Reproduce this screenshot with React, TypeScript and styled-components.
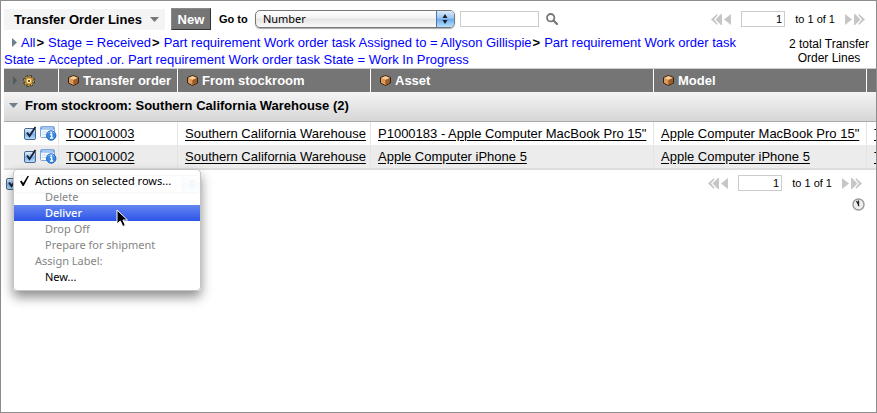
import React from "react";
import styled, { createGlobalStyle, css } from "styled-components";

const GlobalStyle = createGlobalStyle`
  * { box-sizing: border-box; }
  body { margin: 0; background: #fff; }
  body, button, input, select { font-family: "Liberation Sans", Arial, sans-serif; }
`;

const Window = styled.main`
  min-height: 100vh;
  border: 1px solid #8c8c8c;
  padding: 7px 0 0 3px;
  overflow: hidden;
  color: #000;
  font-size: 13px;
`;

const Toolbar = styled.header`
  display: flex;
  align-items: center;
  height: 22px;
`;

const TitleButton = styled.button`
  display: flex;
  align-items: center;
  gap: 8px;
  height: 21px;
  padding: 0 6px 0 10px;
  border: 0;
  background: #f4f4f4;
  font-size: 13px;
  font-weight: bold;
  line-height: 21px;
  white-space: nowrap;
`;

const NewButton = styled.button`
  height: 22px;
  width: 40px;
  margin: 0 8px 0 6px;
  padding: 0;
  border: 1px solid #8a8a8a;
  border-right-color: #333;
  border-bottom-color: #333;
  background: #757575;
  color: #fff;
  font-size: 13px;
  font-weight: bold;
`;

const GoTo = styled.label`
  width: 36px;
  font-size: 11px;
  font-weight: bold;
  white-space: nowrap;
`;

const SelectFrame = styled.span<{ $width: number }>`
  display: grid;
  grid-template-columns: 1fr 18px;
  width: ${(p) => p.$width}px;
  height: 18px;
  overflow: hidden;
  border: 1px solid #777;
  border-radius: 5px;
  background: linear-gradient(#fff, #f2f2f2 45%, #e4e4e4 50%, #fafafa);
  box-shadow: 0 1px 1px #aaa;
`;

const Select = styled.select`
  grid-area: 1 / 1 / 2 / 3;
  width: 100%;
  padding: 0 0 0 7px;
  border: 0;
  background: transparent;
  appearance: none;
  color: #000;
  font-family: "Noto Sans", sans-serif;
  font-size: 11px;
  line-height: 16px;
`;

const StepperBox = styled.span`
  grid-area: 1 / 2;
  display: grid;
  place-items: center;
  border-left: 1px solid #4d74ae;
  background: linear-gradient(#dcebfb, #9cc5f0 45%, #6fabe8 52%, #b5e0ff);
  pointer-events: none;
`;

const TextBox = styled.input<{ $width: number; $end?: boolean }>`
  width: ${(p) => p.$width}px;
  height: 16px;
  padding: 0 2px;
  border: 1px solid #ccc;
  border-radius: 0;
  background: #fff;
  font-size: 11px;
  text-align: ${(p) => (p.$end ? "right" : "left")};
`;

const IconButton = styled.button`
  display: flex;
  padding: 0;
  border: 0;
  background: transparent;
`;

const SearchArea = styled.div`
  display: flex;
  align-items: center;
  gap: 7px;
  margin-left: 5px;
`;

const Pager = styled.nav<{ $inset: number }>`
  display: flex;
  align-items: center;
  margin-left: auto;
  margin-right: ${(p) => p.$inset}px;
  font-size: 11px;
  white-space: nowrap;
`;

const PageArrows = styled.span`
  display: flex;
  gap: 2px;
`;

const PageField = styled.span`
  display: flex;
  align-items: center;
  gap: 10px;
  margin: 0 10px;
`;

const FilterBar = styled.section`
  display: flex;
  justify-content: space-between;
  padding-top: 4px;
  height: 38px;
`;

const Breadcrumbs = styled.nav`
  max-width: 750px;
  font-size: 13px;
  line-height: 17px;
`;

const ToggleIcon = styled.svg`
  display: inline-block;
  margin: 0 3px 0 8px;
`;

const Crumb = styled.a`
  color: #00f;
  text-decoration: none;
`;

const Separator = styled.b`
  margin: 0 4px 0 1px;
`;

const Total = styled.p`
  width: 88px;
  margin: 3px 3px 0 0;
  font-size: 12px;
  line-height: 14px;
  text-align: center;
`;

const Table = styled.table`
  width: 100%;
  border-spacing: 0;
  border-top: 1px solid #ccc;
  border-bottom: 2px solid #ddd;
  table-layout: fixed;
  white-space: nowrap;
`;

const Col = styled.col<{ $width?: number }>`
  width: ${(p) => (p.$width ? p.$width + "px" : "auto")};
`;

const HeadCell = styled.th`
  height: 23px;
  padding: 0 0 0 9px;
  overflow: hidden;
  background: #757575;
  color: #fff;
  text-align: left;
  & + & { border-left: 1px solid #fff; }
`;

const HeadContent = styled.span`
  display: flex;
  align-items: center;
  gap: 4px;
`;

const GroupCell = styled.th`
  height: 30px;
  padding: 0 0 2px 5px;
  border-bottom: 1px solid #aaa;
  background: linear-gradient(#f5f5f5, #d6d6d6);
  text-align: left;
`;

const GroupContent = styled.span`
  display: flex;
  align-items: center;
  gap: 7px;
`;

const Row = styled.tr<{ $shaded?: boolean }>`
  background: ${(p) => (p.$shaded ? "#ececec" : "#fff")};
`;

const Cell = styled.td`
  height: 23px;
  padding: 0 0 0 7px;
  overflow: hidden;
  line-height: 22px;
  & + & { border-left: 1px solid #e4e4e4; }
`;

const RowTools = styled.span`
  display: flex;
  align-items: center;
  gap: 2px;
  height: 22px;
  padding: 0 0 2px 13px;
`;

const RecordLink = styled.a`
  color: #000;
  text-decoration: underline;
  text-underline-offset: 2px;
`;

const CheckLabel = styled.label`
  display: grid;
  width: 14px;
  height: 16px;
  & > * { grid-area: 1 / 1; }
`;

const CheckInput = styled.input`
  width: 12px;
  height: 12px;
  margin: 3px 0 0;
  appearance: none;
  border: 1px solid #49678f;
  border-radius: 2px;
  background: linear-gradient(#e4f0fc, #7fb2ea 55%, #b6e0ff);
`;

const Footer = styled.footer`
  display: flex;
  align-items: flex-start;
  padding-top: 5px;
`;

const FooterCheck = styled.div`
  padding: 0 0 0 2px;
`;

const ActionPicker = styled.div`
  position: relative;
  width: 188px;
  margin-left: -7px;
`;

const Menu = styled.ul`
  position: absolute;
  top: -6px;
  left: 0;
  width: 188px;
  margin: 0;
  padding: 3px 0 5px;
  list-style: none;
  border: 1px solid #c4c4c4;
  border-radius: 4px;
  background: rgba(255, 255, 255, 0.95);
  box-shadow: 0 6px 12px rgba(0, 0, 0, 0.45);
`;

const MenuItem = styled.button<{ $level: number; $active?: boolean }>`
  display: flex;
  align-items: center;
  width: 100%;
  height: 16px;
  padding: 0 0 0 ${(p) => [6, 21, 31][p.$level]}px;
  border: 0;
  background: transparent;
  color: #000;
  font-family: "Noto Sans", sans-serif;
  font-size: 11px;
  line-height: 16px;
  white-space: nowrap;
  &:disabled { color: #858585; }
  ${(p) =>
    p.$active &&
    css`
      background: linear-gradient(#6486f0, #2d55e8);
      color: #fff;
      font-weight: 500;
    `}
`;

const Tick = styled.svg`
  flex: none;
  margin-right: 6px;
`;

const Cursor = styled.svg`
  position: absolute;
  top: 34px;
  left: 103px;
  pointer-events: none;
`;

const Timing = styled.div`
  display: flex;
  justify-content: flex-end;
  padding: 5px 11px 0 0;
`;

const Cube = () => (
  <svg width="11" height="11" viewBox="0 0 11 11" aria-hidden="true">
    <path d="M5.5.5 10.500 2.500V8L5.500 10.500.5 8V2.500Z" fill="#b87333" stroke="#3a2410" />
    <path d="M5.500 1 10 3 5.500 5 1 3Z" fill="#f6cd98" />
    <path d="M1 3 5.500 5V10L1 7.700Z" fill="#dc9a5c" />
    <path d="M10 3 5.500 5V10L10 7.700Z" fill="#9b5c28" />
  </svg>
);

const Gear = () => (
  <svg width="12" height="12" viewBox="0 0 12 12" aria-hidden="true">
    <circle cx="6" cy="6" r="4.700" fill="none" stroke="#2b2009" strokeWidth="2.400" strokeDasharray="2.100 1.590" />
    <circle cx="6" cy="6" r="4.400" fill="none" stroke="#f2b632" strokeWidth="1.500" strokeDasharray="1.400 2.056" />
    <circle cx="6" cy="6" r="2.800" fill="#fff0bd" stroke="#e0a030" strokeWidth="1.300" />
    <circle cx="6" cy="6" r="1.100" fill="#3c2c0c" />
  </svg>
);

const RecordIcon = () => (
  <svg width="17" height="16" viewBox="0 0 17 16" aria-hidden="true">
    <rect x=".5" y="1.500" width="14" height="11" rx="1" fill="#f4f9ff" stroke="#7ba8dc" />
    <path d="M1 2H14V4.500H1Z" fill="#6da2e2" />
    <path d="M2 3H13" stroke="#d9eaff" />
    <path d="M2 7H8M2 9.500H6" stroke="#c9dcf2" />
    <circle cx="11.200" cy="10.500" r="4.700" fill="#3888e0" stroke="#1c62bd" />
    <path d="M8 8.500a3.600 3.600 0 0 1 6.400 0" fill="none" stroke="#8dc2f8" />
    <path d="M10 9.500H11.700V13M10 13H13.200" fill="none" stroke="#fff" strokeWidth="1.300" />
    <circle cx="11.300" cy="7.700" r=".9" fill="#fff" />
  </svg>
);

const Stepper = () => (
  <StepperBox>
    <svg width="6" height="10" viewBox="0 0 6 10" aria-hidden="true">
      <path d="M3 0 5.500 4H.5ZM3 10 .5 6H5.500Z" fill="#14202e" />
    </svg>
  </StepperBox>
);

const Arrows = ({ forward }: { forward?: boolean }) => {
  const single = (
    <IconButton key="single" aria-label={forward ? "Next page" : "Previous page"}>
      <svg width="7" height="11" viewBox="0 0 7 11">
        <path d={forward ? "M0 0 7 5.500 0 11Z" : "M7 0 0 5.500 7 11Z"} fill="#c6c6c6" />
      </svg>
    </IconButton>
  );
  const double = (
    <IconButton key="double" aria-label={forward ? "Last page" : "First page"}>
      <svg width="11" height="11" viewBox="0 0 11 11">
        {forward ? (
          <path d="M0 0H1L6.500 5.500 1 11H0ZM5 0 11 5.500 5 11 4.500 9.500 8 5.500 4.500 1.500Z" fill="#c6c6c6" />
        ) : (
          <path d="M11 0H10L4.500 5.500 10 11H11ZM6 0 0 5.500 6 11 6.500 9.500 3 5.500 6.500 1.500Z" fill="#c6c6c6" />
        )}
      </svg>
    </IconButton>
  );
  return <PageArrows>{forward ? [single, double] : [double, single]}</PageArrows>;
};

const Pagination = ({ inset }: { inset: number }) => (
  <Pager $inset={inset} aria-label="Pages">
    <Arrows />
    <PageField>
      <TextBox $width={44} $end defaultValue="1" aria-label="First row" />
      <span>to 1 of 1</span>
    </PageField>
    <Arrows forward />
  </Pager>
);

const Checkbox = ({ label }: { label: string }) => (
  <CheckLabel>
    <CheckInput type="checkbox" defaultChecked aria-label={label} />
    <svg width="14" height="16" viewBox="0 0 14 16" pointerEvents="none" aria-hidden="true">
      <path d="M3 7.500 5.500 11 11.500 2" fill="none" stroke="#17233a" strokeWidth="1.900" />
    </svg>
  </CheckLabel>
);

const columns = ["Transfer order", "From stockroom", "Asset", "Model"];
const widths = [54, 119, 193, 283, 213];
const records = [
  ["TO0010003", "Southern California Warehouse", 'P1000183 - Apple Computer MacBook Pro 15"', 'Apple Computer MacBook Pro 15"', "T"],
  ["TO0010002", "Southern California Warehouse", "Apple Computer iPhone 5", "Apple Computer iPhone 5", "T"],
];
const actions = [
  { text: "Actions on selected rows...", level: 0 },
  { text: "Delete", level: 2, disabled: true },
  { text: "Deliver", level: 2, active: true },
  { text: "Drop Off", level: 2, disabled: true },
  { text: "Prepare for shipment", level: 2, disabled: true },
  { text: "Assign Label:", level: 1, disabled: true },
  { text: "New...", level: 2 },
];

export default function App() {
  return (
    <>
      <GlobalStyle />
      <Window>
        <Toolbar>
          <TitleButton>
            Transfer Order Lines
            <svg width="9" height="5" viewBox="0 0 9 5" aria-hidden="true">
              <path d="M0 0H9L4.500 5Z" fill="#777" />
            </svg>
          </TitleButton>
          <NewButton>New</NewButton>
          <GoTo htmlFor="field">Go to</GoTo>
          <SelectFrame $width={200}>
            <Select id="field">
              <option>Number</option>
            </Select>
            <Stepper />
          </SelectFrame>
          <SearchArea>
            <TextBox $width={79} aria-label="Search text" />
            <IconButton aria-label="Search">
              <svg width="12" height="12" viewBox="0 0 12 12">
                <circle cx="4.700" cy="4.700" r="3.700" fill="none" stroke="#777" strokeWidth="1.800" />
                <path d="M7.500 7.500 11 11" stroke="#777" strokeWidth="2.300" strokeLinecap="round" />
              </svg>
            </IconButton>
          </SearchArea>
          <Pagination inset={11} />
        </Toolbar>

        <FilterBar>
          <Breadcrumbs aria-label="Filter">
            <ToggleIcon width="6" height="9" viewBox="0 0 6 9" aria-hidden="true">
              <path d="M0 0 5 4.500 0 9Z" fill="#6f7f8c" />
            </ToggleIcon>
            <Crumb href="#all">All</Crumb>
            <Separator>&gt;</Separator>
            <Crumb href="#stage">Stage = Received</Crumb>
            <Separator>&gt;</Separator>
            <Crumb href="#assigned">Part requirement Work order task Assigned to = Allyson Gillispie</Crumb>
            <Separator>&gt;</Separator>
            <Crumb href="#state">
              Part requirement Work order task State = Accepted .or. Part requirement Work order task State = Work In Progress
            </Crumb>
          </Breadcrumbs>
          <Total>2 total Transfer Order Lines</Total>
        </FilterBar>

        <Table>
          <colgroup>
            {widths.map((w, i) => <Col key={i} $width={w} />)}
            <Col />
          </colgroup>
          <thead>
            <tr>
              <HeadCell>
                <HeadContent aria-label="List options">
                  <svg width="6" height="9" viewBox="0 0 6 9" aria-hidden="true">
                    <path d="M0 0 4 4.500 0 9Z" fill="#4e5b63" />
                  </svg>
                  <Gear />
                </HeadContent>
              </HeadCell>
              {columns.map((c) => (
                <HeadCell key={c} scope="col">
                  <HeadContent><Cube />{c}</HeadContent>
                </HeadCell>
              ))}
              <HeadCell aria-label="More" />
            </tr>
          </thead>
          <tbody>
            <tr>
              <GroupCell colSpan={6} scope="rowgroup">
                <GroupContent>
                  <svg width="9" height="5" viewBox="0 0 9 5" aria-hidden="true">
                    <path d="M0 0H9L4.500 5Z" fill="#6f7f8c" />
                  </svg>
                  From stockroom: Southern California Warehouse (2)
                </GroupContent>
              </GroupCell>
            </tr>
            {records.map((r, i) => (
              <Row key={r[0]} $shaded={i % 2 === 1}>
                <Cell>
                  <RowTools>
                    <Checkbox label={"Select " + r[0]} />
                    <IconButton aria-label={"Open " + r[0]}><RecordIcon /></IconButton>
                  </RowTools>
                </Cell>
                {r.map((text, j) => (
                  <Cell key={j}><RecordLink href={"#" + r[0]}>{text}</RecordLink></Cell>
                ))}
              </Row>
            ))}
          </tbody>
        </Table>

        <Footer>
          <FooterCheck><Checkbox label="Select all rows" /></FooterCheck>
          <ActionPicker>
            <SelectFrame $width={188} aria-hidden="true"><Stepper /></SelectFrame>
            <Menu aria-label="Row actions">
              {actions.map((a) => (
                <li key={a.text}>
                  <MenuItem $level={a.level} $active={a.active} disabled={a.disabled}>
                    {a.level === 0 && (
                      <Tick width="9" height="10" viewBox="0 0 9 10" aria-hidden="true">
                        <path d="M0 5.500 1.500 4.500 3.200 7 7.500 0H9L3.700 10H2.700Z" fill="#000" />
                      </Tick>
                    )}
                    {a.text}
                  </MenuItem>
                </li>
              ))}
            </Menu>
            <Cursor width="13" height="19" viewBox="0 0 13 19" aria-hidden="true">
              <path d="M1 1V15L4.300 12 6.800 17.500 9.300 16.400 6.900 11H11.500Z" fill="#000" stroke="#fff" />
            </Cursor>
          </ActionPicker>
          <Pagination inset={14} />
        </Footer>
        <Timing>
          <IconButton aria-label="Response time">
            <svg width="13" height="13" viewBox="0 0 13 13">
              <circle cx="6.500" cy="6.500" r="5.500" fill="#eee" stroke="#999" strokeWidth="1.400" />
              <path d="M4.500 3 6.500 6.500V2.500V8" fill="none" stroke="#222" strokeWidth="1.300" />
            </svg>
          </IconButton>
        </Timing>
      </Window>
    </>
  );
}
